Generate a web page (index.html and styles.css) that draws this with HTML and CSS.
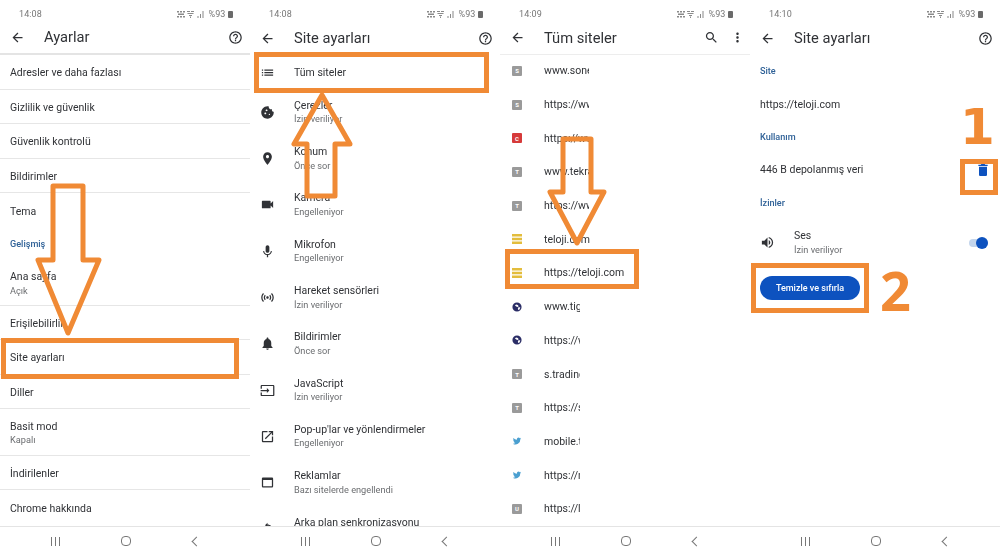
FILE: index.html
```html
<!DOCTYPE html>
<html lang="tr">
<head>
<meta charset="utf-8">
<title>Site ayarları</title>
<link rel="stylesheet" href="styles.css">
</head>
<body>
<svg class="defs" width="0" height="0" aria-hidden="true">
  <symbol id="i-back" viewBox="0 0 24 24"><path d="M20 11H7.83l5.59-5.59L12 4l-8 8 8 8 1.41-1.41L7.83 13H20v-2z"/></symbol>
  <symbol id="i-help" viewBox="0 0 24 24"><path d="M11 18h2v-2h-2v2zm1-16C6.48 2 2 6.48 2 12s4.48 10 10 10 10-4.48 10-10S17.52 2 12 2zm0 18c-4.41 0-8-3.59-8-8s3.59-8 8-8 8 3.59 8 8-3.59 8-8 8zm0-14c-2.21 0-4 1.79-4 4h2c0-1.1.9-2 2-2s2 .9 2 2c0 2-3 1.75-3 5h2c0-2.25 3-2.5 3-5 0-2.21-1.79-4-4-4z"/></symbol>
  <symbol id="i-list" viewBox="0 0 24 24"><path d="M3 13h2v-2H3v2zm0 4h2v-2H3v2zm0-8h2V7H3v2zm4 4h14v-2H7v2zm0 4h14v-2H7v2zM7 7v2h14V7H7z"/></symbol>
  <symbol id="i-cookie" viewBox="0 0 24 24"><path d="M21.95 10.99c-1.79-.03-3.7-1.95-2.68-4.22-2.97 1-5.78-1.59-5.19-4.56C7.11.74 2 6.41 2 12c0 5.52 4.48 10 10 10 5.89 0 10.54-5.08 9.95-11.01zM8.5 15c-.83 0-1.5-.67-1.5-1.5S7.67 12 8.5 12s1.5.67 1.5 1.5S9.33 15 8.5 15zm2-5C9.67 10 9 9.33 9 8.5S9.67 7 10.5 7s1.5.67 1.5 1.5-.67 1.5-1.5 1.5zm4.5 6c-.55 0-1-.45-1-1s.45-1 1-1 1 .45 1 1-.45 1-1 1z"/></symbol>
  <symbol id="i-place" viewBox="0 0 24 24"><path d="M12 2C8.13 2 5 5.13 5 9c0 5.25 7 13 7 13s7-7.75 7-13c0-3.87-3.13-7-7-7zm0 9.5c-1.38 0-2.5-1.12-2.5-2.5s1.12-2.5 2.5-2.5 2.5 1.12 2.5 2.5-1.12 2.5-2.5 2.5z"/></symbol>
  <symbol id="i-video" viewBox="0 0 24 24"><path d="M17 10.5V7c0-.55-.45-1-1-1H4c-.55 0-1 .45-1 1v10c0 .55.45 1 1 1h12c.55 0 1-.45 1-1v-3.5l4 4v-11l-4 4z"/></symbol>
  <symbol id="i-mic" viewBox="0 0 24 24"><path d="M12 14c1.66 0 2.99-1.34 2.99-3L15 5c0-1.66-1.34-3-3-3S9 3.34 9 5v6c0 1.66 1.34 3 3 3zm5.3-3c0 3-2.54 5.1-5.3 5.1S6.7 14 6.7 11H5c0 3.41 2.72 6.23 6 6.72V21h2v-3.28c3.28-.48 6-3.3 6-6.72h-1.7z"/></symbol>
  <symbol id="i-sensor" viewBox="0 0 24 24"><path d="M7.76 16.24C6.67 15.16 6 13.66 6 12s.67-3.16 1.76-4.24l1.42 1.42C8.45 9.9 8 10.9 8 12c0 1.1.45 2.1 1.17 2.83l-1.41 1.41zm8.48 0C17.33 15.16 18 13.66 18 12s-.67-3.16-1.76-4.24l-1.42 1.42C15.55 9.9 16 10.9 16 12c0 1.1-.45 2.1-1.17 2.83l1.41 1.41zM12 10c-1.1 0-2 .9-2 2s.9 2 2 2 2-.9 2-2-.9-2-2-2zm8 2c0 2.21-.9 4.21-2.35 5.65l1.42 1.42C20.88 17.26 22 14.76 22 12s-1.12-5.26-2.93-7.07l-1.42 1.42C19.1 7.79 20 9.79 20 12zM6.35 6.35L4.93 4.93C3.12 6.74 2 9.24 2 12s1.12 5.26 2.93 7.07l1.42-1.42C4.9 16.21 4 14.21 4 12s.9-4.21 2.35-5.65z"/></symbol>
  <symbol id="i-bell" viewBox="0 0 24 24"><path d="M12 22c1.1 0 2-.9 2-2h-4c0 1.1.9 2 2 2zm6-6v-5c0-3.07-1.63-5.64-4.5-6.32V4c0-.83-.67-1.5-1.5-1.5s-1.5.67-1.5 1.5v.68C7.64 5.36 6 7.92 6 11v5l-2 2v1h16v-1l-2-2z"/></symbol>
  <symbol id="i-input" viewBox="0 0 24 24"><path d="M21 3.01H3c-1.1 0-2 .9-2 2V9h2V4.99h18v14.03H3V15H1v4.01c0 1.1.9 1.98 2 1.98h18c1.1 0 2-.88 2-1.98v-14c0-1.11-.9-2-2-2zM11 16l4-4-4-4v3H1v2h10v3z"/></symbol>
  <symbol id="i-open" viewBox="0 0 24 24"><path d="M19 19H5V5h7V3H5c-1.11 0-2 .9-2 2v14c0 1.1.89 2 2 2h14c1.1 0 2-.9 2-2v-7h-2v7zM14 3v2h3.59l-9.83 9.83 1.41 1.41L19 6.41V10h2V3h-7z"/></symbol>
  <symbol id="i-ads" viewBox="0 0 24 24"><path d="M19 4H5c-1.1 0-2 .9-2 2v12c0 1.1.9 2 2 2h14c1.1 0 2-.9 2-2V6c0-1.1-.9-2-2-2zm0 14H5V8h14v10z"/></symbol>
  <symbol id="i-sync" viewBox="0 0 24 24"><path d="M12 4V1L8 5l4 4V6c3.31 0 6 2.69 6 6 0 1.01-.25 1.97-.7 2.8l1.46 1.46C19.54 15.03 20 13.57 20 12c0-4.42-3.58-8-8-8zm0 14c-3.31 0-6-2.69-6-6 0-1.01.25-1.97.7-2.8L5.24 7.74C4.46 8.97 4 10.43 4 12c0 4.42 3.58 8 8 8v3l4-4-4-4v3z"/></symbol>
  <symbol id="i-search" viewBox="0 0 24 24"><path d="M15.5 14h-.79l-.28-.27C15.41 12.59 16 11.11 16 9.5 16 5.91 13.09 3 9.5 3S3 5.91 3 9.5 5.91 16 9.5 16c1.61 0 3.09-.59 4.23-1.57l.27.28v.79l5 4.99L20.49 19l-4.99-5zm-6 0C7.01 14 5 11.99 5 9.5S7.01 5 9.5 5 14 7.01 14 9.5 11.99 14 9.5 14z"/></symbol>
  <symbol id="i-more" viewBox="0 0 24 24"><path d="M12 8c1.1 0 2-.9 2-2s-.9-2-2-2-2 .9-2 2 .9 2 2 2zm0 2c-1.1 0-2 .9-2 2s.9 2 2 2 2-.9 2-2-.9-2-2-2zm0 6c-1.1 0-2 .9-2 2s.9 2 2 2 2-.9 2-2-.9-2-2-2z"/></symbol>
  <symbol id="i-trash" viewBox="0 0 24 24"><path d="M6 19c0 1.1.9 2 2 2h8c1.1 0 2-.9 2-2V7H6v12zM19 4h-3.5l-1-1h-5l-1 1H5v2h14V4z"/></symbol>
  <symbol id="i-volume" viewBox="0 0 24 24"><path d="M3 9v6h4l5 5V4L7 9H3zm13.5 3c0-1.77-1.02-3.29-2.5-4.03v8.05c1.48-.73 2.5-2.25 2.5-4.02zM14 3.23v2.06c2.89.86 5 3.54 5 6.71s-2.11 5.85-5 6.71v2.06c4.01-.91 7-4.49 7-8.77 0-4.28-2.99-7.86-7-8.77z"/></symbol>
  <symbol id="i-stack" viewBox="0 0 10 10"><path d="M0 0h10v2.4H0zM0 3.8h10v2.4H0zM0 7.6h10V10H0z"/></symbol>
  <symbol id="i-globe" viewBox="0 0 24 24"><path d="M12 1a11 11 0 1 0 0 22 11 11 0 0 0 0-22zm-2 5 4 1 2 3-2 2-4-1-3-3zm6 6 4 1-2 5-3 1-1-3z"/></symbol>
  <symbol id="i-bird" viewBox="0 0 24 24"><path d="M22 5.9c-.7.3-1.5.5-2.4.6.9-.5 1.5-1.3 1.8-2.3-.8.5-1.700.8-2.600 1a4.100 4.100 0 0 0-7 3.700A11.600 11.600 0 0 1 3.400 4.700a4.100 4.100 0 0 0 1.300 5.500c-.7 0-1.300-.2-1.900-.5 0 2 1.400 3.700 3.300 4.100-.6.200-1.200.2-1.900.1.500 1.600 2 2.800 3.800 2.800A8.300 8.300 0 0 1 2 18.400 11.600 11.600 0 0 0 20 8c.8-.5 1.500-1.200 2-2.100z"/></symbol>
  <symbol id="i-status" viewBox="0 0 28 8"><path d="M0 1h2v1.500H0zM3 1h2v1.500H3zM6 1h2v1.500H6zM1 3.500h6V5H1zM0 6h2v1.500H0zM3 6h2v1.500H3zM6 6h2v1.500H6zM10 1h3v1h-3zM14 1h3v1h-3zM10.500 3h6v1h-6zM12 5h3v1h-3zM13 6.500h1V8h-1zM20.500 6h1v2h-1zM23 4h1v4h-1zM25.500 1h1v7h-1z"/></symbol>
</svg>

<main class="phones">

  <section class="phone">
    <div class="status"><span class="clock">14:08</span><span class="status-right"><svg class="status-icons"><use href="#i-status"/></svg><span>%93</span><i class="battery"></i></span></div>
    <header class="toolbar toolbar-line">
      <svg class="icon back"><use href="#i-back"/></svg>
      <h1 class="title">Ayarlar</h1>
      <svg class="icon action"><use href="#i-help"/></svg>
    </header>
    <div class="content">
      <div class="row line"><div class="text"><p class="name">Adresler ve daha fazlası</p></div></div>
      <div class="row line"><div class="text"><p class="name">Gizlilik ve güvenlik</p></div></div>
      <div class="row line"><div class="text"><p class="name">Güvenlik kontrolü</p></div></div>
      <div class="row line"><div class="text"><p class="name">Bildirimler</p></div></div>
      <div class="row"><div class="text"><p class="name">Tema</p></div></div>
      <div class="label">Gelişmiş</div>
      <div class="row tall line"><div class="text"><p class="name">Ana sayfa</p><p class="sub">Açık</p></div></div>
      <div class="row line"><div class="text"><p class="name">Erişilebilirlik</p></div></div>
      <div class="row line"><div class="text"><p class="name">Site ayarları</p></div></div>
      <div class="row line"><div class="text"><p class="name">Diller</p></div></div>
      <div class="row tall line"><div class="text"><p class="name">Basit mod</p><p class="sub">Kapalı</p></div></div>
      <div class="row line"><div class="text"><p class="name">İndirilenler</p></div></div>
      <div class="row"><div class="text"><p class="name">Chrome hakkında</p></div></div>
    </div>
    <nav class="nav"><span class="nav-bars"><i></i><i></i><i></i></span><span class="nav-home"></span><span class="nav-back"></span></nav>
  </section>

  <section class="phone">
    <div class="status"><span class="clock">14:08</span><span class="status-right"><svg class="status-icons"><use href="#i-status"/></svg><span>%93</span><i class="battery"></i></span></div>
    <header class="toolbar">
      <svg class="icon back"><use href="#i-back"/></svg>
      <h1 class="title">Site ayarları</h1>
      <svg class="icon action"><use href="#i-help"/></svg>
    </header>
    <div class="content settings">
      <div class="row first-setting"><svg class="icon lead"><use href="#i-list"/></svg><div class="text"><p class="name">Tüm siteler</p></div></div>
      <div class="row tall"><svg class="icon lead"><use href="#i-cookie"/></svg><div class="text"><p class="name">Çerezler</p><p class="sub">İzin veriliyor</p></div></div>
      <div class="row tall"><svg class="icon lead"><use href="#i-place"/></svg><div class="text"><p class="name">Konum</p><p class="sub">Önce sor</p></div></div>
      <div class="row tall"><svg class="icon lead"><use href="#i-video"/></svg><div class="text"><p class="name">Kamera</p><p class="sub">Engelleniyor</p></div></div>
      <div class="row tall"><svg class="icon lead"><use href="#i-mic"/></svg><div class="text"><p class="name">Mikrofon</p><p class="sub">Engelleniyor</p></div></div>
      <div class="row tall"><svg class="icon lead"><use href="#i-sensor"/></svg><div class="text"><p class="name">Hareket sensörleri</p><p class="sub">İzin veriliyor</p></div></div>
      <div class="row tall"><svg class="icon lead"><use href="#i-bell"/></svg><div class="text"><p class="name">Bildirimler</p><p class="sub">Önce sor</p></div></div>
      <div class="row tall"><svg class="icon lead"><use href="#i-input"/></svg><div class="text"><p class="name">JavaScript</p><p class="sub">İzin veriliyor</p></div></div>
      <div class="row tall"><svg class="icon lead"><use href="#i-open"/></svg><div class="text"><p class="name">Pop-up'lar ve yönlendirmeler</p><p class="sub">Engelleniyor</p></div></div>
      <div class="row tall"><svg class="icon lead"><use href="#i-ads"/></svg><div class="text"><p class="name">Reklamlar</p><p class="sub">Bazı sitelerde engellendi</p></div></div>
      <div class="row tall"><svg class="icon lead"><use href="#i-sync"/></svg><div class="text"><p class="name">Arka plan senkronizasyonu</p><p class="sub">İzin veriliyor</p></div></div>
    </div>
    <nav class="nav"><span class="nav-bars"><i></i><i></i><i></i></span><span class="nav-home"></span><span class="nav-back"></span></nav>
  </section>

  <section class="phone">
    <div class="status"><span class="clock">14:09</span><span class="status-right"><svg class="status-icons"><use href="#i-status"/></svg><span>%93</span><i class="battery"></i></span></div>
    <header class="toolbar toolbar-soft">
      <svg class="icon back"><use href="#i-back"/></svg>
      <h1 class="title">Tüm siteler</h1>
      <svg class="icon action-search"><use href="#i-search"/></svg>
      <svg class="icon action"><use href="#i-more"/></svg>
    </header>
    <div class="content site-list">
      <div class="site"><span class="fav">S</span><span class="url wide">www.soner.com</span></div>
      <div class="site"><span class="fav">S</span><span class="url wide">https://www.soner.com</span></div>
      <div class="site"><span class="fav red">C</span><span class="url wide">https://www.cumhuriyet.com</span></div>
      <div class="site"><span class="fav">T</span><span class="url wide">www.tekrar.com</span></div>
      <div class="site"><span class="fav">T</span><span class="url wide">https://www.tekrar.com</span></div>
      <div class="site"><svg class="fav-icon yellow"><use href="#i-stack"/></svg><span class="url">teloji.com</span></div>
      <div class="site"><svg class="fav-icon yellow"><use href="#i-stack"/></svg><span class="url">https://teloji.com</span></div>
      <div class="site"><svg class="fav-icon navy"><use href="#i-globe"/></svg><span class="url narrow">www.tiglon.com</span></div>
      <div class="site"><svg class="fav-icon navy"><use href="#i-globe"/></svg><span class="url narrow">https://www.tiglon.com</span></div>
      <div class="site"><span class="fav">T</span><span class="url narrow">s.tradingview.com</span></div>
      <div class="site"><span class="fav">T</span><span class="url narrow">https://s.tradingview.com</span></div>
      <div class="site"><svg class="fav-icon sky"><use href="#i-bird"/></svg><span class="url narrow">mobile.twitter.com</span></div>
      <div class="site"><svg class="fav-icon sky"><use href="#i-bird"/></svg><span class="url narrow">https://mobile.twitter.com</span></div>
      <div class="site"><span class="fav">U</span><span class="url narrow">https://l.uzmantv.com</span></div>
    </div>
    <nav class="nav"><span class="nav-bars"><i></i><i></i><i></i></span><span class="nav-home"></span><span class="nav-back"></span></nav>
  </section>

  <section class="phone">
    <div class="status"><span class="clock">14:10</span><span class="status-right"><svg class="status-icons"><use href="#i-status"/></svg><span>%93</span><i class="battery"></i></span></div>
    <header class="toolbar">
      <svg class="icon back"><use href="#i-back"/></svg>
      <h1 class="title">Site ayarları</h1>
      <svg class="icon action"><use href="#i-help"/></svg>
    </header>
    <div class="content settings">
      <div class="label label-site">Site</div>
      <div class="row"><div class="text"><p class="name">https://teloji.com</p></div></div>
      <div class="label label-use">Kullanım</div>
      <div class="row"><div class="text"><p class="name">446 B depolanmış veri</p></div><svg class="icon trash"><use href="#i-trash"/></svg></div>
      <div class="label label-perm">İzinler</div>
      <div class="row tall"><svg class="icon lead"><use href="#i-volume"/></svg><div class="text"><p class="name">Ses</p><p class="sub">İzin veriliyor</p></div><span class="toggle"><i></i></span></div>
      <div class="actions"><button class="reset" type="button">Temizle ve sıfırla</button></div>
    </div>
    <nav class="nav"><span class="nav-bars"><i></i><i></i><i></i></span><span class="nav-home"></span><span class="nav-back"></span></nav>
  </section>

  <svg class="marks" viewBox="0 0 1000 555" aria-hidden="true">
    <g class="mark-line">
      <path d="M53 186H83V260H99L68 333 38 260H53Z"/>
      <rect x="3.500" y="340.500" width="233" height="36"/>
      <path d="M307 196H335V144H350L322 95 294 144H307Z"/>
      <rect x="256.500" y="54.500" width="230" height="36"/>
      <path d="M563 139H591V192H604L577 243 550 192H563Z"/>
      <rect x="507.500" y="251.500" width="129" height="35"/>
      <rect x="962.500" y="161.500" width="33" height="31"/>
      <rect x="753.500" y="265.500" width="113" height="45"/>
    </g>
  </svg>
  <span class="digit digit-one">1</span>
  <span class="digit digit-two">2</span>
</main>
</body>
</html>
```

FILE: styles.css
```css
* { box-sizing: border-box; }
html, body { margin: 0; padding: 0; }
body {
  width: 1000px;
  height: 555px;
  overflow: hidden;
  background: #fff;
  font-family: Roboto, "Liberation Sans", sans-serif;
  color: #303236;
}
p, h1 { margin: 0; font-weight: 400; }
.defs { position: absolute; }

.phones { position: relative; display: flex; width: 1000px; height: 555px; filter: blur(.35px); }
.phone { display: flex; flex-direction: column; width: 250px; height: 555px; }

.status {
  display: flex;
  align-items: center;
  justify-content: space-between;
  height: 21px;
  padding: 7px 17.5px 0 19px;
  flex: none;
  font-size: 9px;
  color: #777;
  letter-spacing: .1px;
}
.status-right { display: flex; align-items: center; gap: 2px; }
.status-icons { width: 28px; height: 8px; fill: #8a8a8a; margin-right: 1px; }
.battery { width: 5px; height: 7px; background: #6a6a6a; border-radius: 1px; }

.toolbar {
  position: relative;
  z-index: 1;
  display: flex;
  align-items: center;
  height: 34px;
  flex: none;
  padding: 0 7.5px 0 9.500px;
  background: #fff;
}
.toolbar-line { border-bottom: 2px solid #e4e4e4; }
.toolbar-soft { border-bottom: 1px solid #ededed; padding-right: 5.500px; }
.icon { width: 15px; height: 15px; fill: #303236; flex: none; }
.back { margin-right: 19.500px; }
.title { flex: 1; font-size: 14.7px; color: #303236; }
.action-search { margin-right: 11px; }

.content { flex: 1; min-height: 0; overflow: hidden; }
.row {
  display: flex;
  align-items: center;
  height: 34.5px;
  padding: 2px 10px 0;
}
.row.tall { height: 46.3px; padding-top: 3px; }
.row.line { border-bottom: 1px solid #e6e6e6; }
.row.first-setting { height: 33.5px; }
.settings .row { padding-top: 0; }
.settings .row.tall { padding-top: 1.5px; }
.settings .row.first-setting { padding-top: 2px; }
.text { flex: 1; min-width: 0; }
.name { font-size: 10.5px; line-height: 13.5px; color: #303236; white-space: nowrap; }
.sub { font-size: 9.2px; line-height: 13.5px; color: #6b6d70; white-space: nowrap; }
.lead { margin: 0 19.500px 0 -.5px; }
.label {
  display: flex;
  align-items: center;
  height: 32px;
  padding: 0 10px;
  font-size: 9.100px;
  font-weight: 500;
  color: #2f6197;
}
.label-use { height: 31px; }

.site-list { margin-top: -1px; }
.site { display: flex; align-items: center; height: 33.7px; padding-left: 12px; }
.fav {
  display: flex;
  align-items: center;
  justify-content: center;
  width: 10px;
  height: 10px;
  margin-right: 22px;
  flex: none;
  border-radius: 1px;
  background: #9a9a9a;
  color: #fff;
  font-size: 6px;
  font-weight: 700;
}
.fav.red { background: #d63a3a; }
.fav-icon { width: 10px; height: 10px; margin-right: 22px; flex: none; }
.yellow { fill: #e3bd3d; }
.navy { fill: #2b2d66; }
.sky { fill: #4a9fd0; }
.url { font-size: 10.5px; color: #303236; white-space: nowrap; overflow: hidden; }
.url.wide { width: 45px; }
.url.narrow { width: 36px; }

.trash { width: 16px; height: 16px; fill: #0d52bf; margin: 0 -1px 0 0; }
.toggle { position: relative; width: 19px; height: 8px; margin-right: 2px; border-radius: 4px; background: #c3d5ec; }
.toggle i {
  position: absolute;
  top: -2px;
  right: 0;
  width: 12px;
  height: 12px;
  border-radius: 50%;
  background: #0d52bf;
}
.actions { padding: 11px 0 0 10px; }
.reset {
  display: block;
  width: 100px;
  height: 24px;
  border: 0;
  border-radius: 12px;
  padding: 0;
  background: #0d52bf;
  color: #fff;
  font: 500 9px Roboto, "Liberation Sans", sans-serif;
}

.nav {
  display: flex;
  align-items: center;
  height: 29px;
  flex: none;
  border-top: 1px solid #e4e4e4;
  background: #fff;
  position: relative;
  z-index: 1;
}
.nav-bars { display: flex; justify-content: space-between; width: 9px; height: 9px; margin-left: 51px; }
.nav-bars i { width: 1px; background: #777; }
.nav-home { width: 10px; height: 10px; margin-left: 61px; border: 1px solid #777; border-radius: 4px; }
.nav-back {
  width: 7px;
  height: 7px;
  margin-left: 62px;
  border-left: 1px solid #777;
  border-bottom: 1px solid #777;
  transform: rotate(45deg);
}

.marks { position: absolute; inset: 0; width: 1000px; height: 555px; z-index: 2; pointer-events: none; }
.mark-line { fill: none; stroke: #f08a35; stroke-width: 5; stroke-linejoin: round; }
.mark-line rect { stroke-linejoin: miter; }
.digit {
  position: absolute;
  z-index: 2;
  font-weight: 700;
  color: #f08a35;
  line-height: 1;
}
.digit-one { left: 960px; top: 102px; font-size: 50px; font-family: "DejaVu Sans", sans-serif; }
.digit-two { left: 880px; top: 263px; font-size: 54px; font-family: "Open Sans", sans-serif; }
```
